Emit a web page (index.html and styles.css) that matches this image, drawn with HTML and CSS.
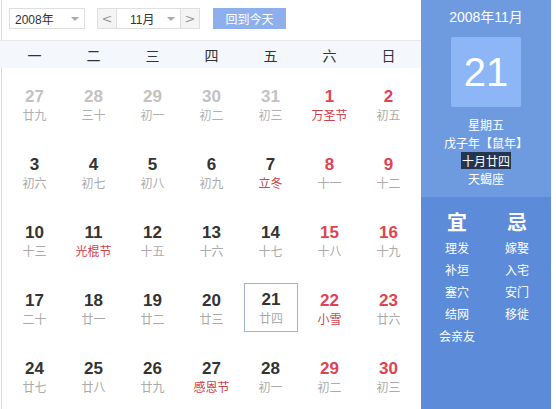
FILE: index.html
```html
<!DOCTYPE html>
<html><head><meta charset="utf-8"><link rel="stylesheet" href="styles.css"></head>
<body>
<div class="cal">
  <div class="main">
    <div class="toolbar">
      <div class="sel year"><span>2008年</span><i class="tri"></i></div>
      <div class="mgroup">
        <span class="arrow">&lt;</span>
        <div class="sel month"><span>11月</span><i class="tri"></i></div>
        <span class="arrow">&gt;</span>
      </div>
      <button class="today">回到今天</button>
    </div>
    <div class="weekhead">
      <span>一</span><span>二</span><span>三</span><span>四</span><span>五</span><span>六</span><span>日</span>
    </div>
    <div class="grid">
      <div class="cell other"><b>27</b><small>廿九</small></div>
      <div class="cell other"><b>28</b><small>三十</small></div>
      <div class="cell other"><b>29</b><small>初一</small></div>
      <div class="cell other"><b>30</b><small>初二</small></div>
      <div class="cell other"><b>31</b><small>初三</small></div>
      <div class="cell wk"><b>1</b><small class="fest">万圣节</small></div>
      <div class="cell wk"><b>2</b><small>初五</small></div>

      <div class="cell"><b>3</b><small>初六</small></div>
      <div class="cell"><b>4</b><small>初七</small></div>
      <div class="cell"><b>5</b><small>初八</small></div>
      <div class="cell"><b>6</b><small>初九</small></div>
      <div class="cell"><b>7</b><small class="fest">立冬</small></div>
      <div class="cell wk"><b>8</b><small>十一</small></div>
      <div class="cell wk"><b>9</b><small>十二</small></div>

      <div class="cell"><b>10</b><small>十三</small></div>
      <div class="cell"><b>11</b><small class="fest">光棍节</small></div>
      <div class="cell"><b>12</b><small>十五</small></div>
      <div class="cell"><b>13</b><small>十六</small></div>
      <div class="cell"><b>14</b><small>十七</small></div>
      <div class="cell wk"><b>15</b><small>十八</small></div>
      <div class="cell wk"><b>16</b><small>十九</small></div>

      <div class="cell"><b>17</b><small>二十</small></div>
      <div class="cell"><b>18</b><small>廿一</small></div>
      <div class="cell"><b>19</b><small>廿二</small></div>
      <div class="cell"><b>20</b><small>廿三</small></div>
      <div class="cell cur"><b>21</b><small>廿四</small></div>
      <div class="cell wk"><b>22</b><small class="fest">小雪</small></div>
      <div class="cell wk"><b>23</b><small>廿六</small></div>

      <div class="cell"><b>24</b><small>廿七</small></div>
      <div class="cell"><b>25</b><small>廿八</small></div>
      <div class="cell"><b>26</b><small>廿九</small></div>
      <div class="cell"><b>27</b><small class="fest">感恩节</small></div>
      <div class="cell"><b>28</b><small>初一</small></div>
      <div class="cell wk"><b>29</b><small>初二</small></div>
      <div class="cell wk"><b>30</b><small>初三</small></div>
    </div>
  </div>
  <div class="side">
    <div class="side-top">
      <div class="ym">2008年11月</div>
      <div class="bigday">21</div>
      <div class="info">
        <div>星期五</div>
        <div>戊子年【鼠年】</div>
        <div><span class="hl">十月廿四</span></div>
        <div>天蝎座</div>
      </div>
    </div>
    <div class="side-bot">
      <div class="col">
        <div class="h">宜</div>
        <div>理发</div><div>补垣</div><div>塞穴</div><div>结网</div><div>会亲友</div>
      </div>
      <div class="col">
        <div class="h">忌</div>
        <div>嫁娶</div><div>入宅</div><div>安门</div><div>移徙</div>
      </div>
    </div>
  </div>
</div>
</body></html>
```
FILE: styles.css
```css
* { box-sizing: border-box; }
html, body { margin: 0; padding: 0; background: #fff; }
body { font-family: "Liberation Sans", Arial, "Noto Sans CJK SC", sans-serif; width: 556px; height: 409px; overflow: hidden; }
.cal { display: flex; height: 409px; }
.main { width: 420px; border-left: 1px solid #d8d8d8; margin-left: 1px; }
.toolbar { display: flex; align-items: center; height: 40px; padding: 0 0 3px 7px; }
.sel { display: flex; align-items: center; justify-content: space-between; height: 21px; border: 1px solid #dedede; font-size: 12px; color: #333; padding: 0 5px 0 5px; background: #fff; }
.year { width: 76px; }
.tri { width: 0; height: 0; border-left: 4px solid transparent; border-right: 4px solid transparent; border-top: 4px solid #aaa; }
.mgroup { display: flex; margin-left: 12px; height: 21px; }
.arrow { width: 20px; height: 21px; border: 1px solid #dedede; background: #f4f4f4; color: #999; font-size: 13px; display: flex; align-items: center; justify-content: center; font-family: "DejaVu Sans", sans-serif; }
.month { width: 63px; border-left: none; border-right: none; padding-left: 13px; }
.today { margin-left: 13px; width: 73px; height: 21px; border: none; background: #8db0ec; color: #fff; font-family: "Noto Sans CJK SC", sans-serif; font-size: 12px; padding: 0; }
.weekhead { display: grid; grid-template-columns: repeat(7, 59px); margin-left: -2px; padding-left: 5px; width: 422px; height: 28px; background: #f4f8fd; border-top: 1px solid #e3e8ef; align-items: center; font-family: "Noto Sans CJK SC", sans-serif; font-size: 14px; color: #333; }
.weekhead span { text-align: center; }
.grid { display: grid; grid-template-columns: repeat(7, 59px); grid-auto-rows: 68px; padding-left: 3px; }
.cell { display: flex; flex-direction: column; align-items: center; padding-top: 19px; }
.cell b { font-size: 17px; font-weight: bold; color: #333; line-height: 20px; }
.cell small { font-family: "Noto Sans CJK SC", sans-serif; font-size: 12px; color: #aaa; line-height: 16px; }
.cell.other b { color: #c2c2c2; }
.cell.other small { color: #b0b0b0; }
.cell.wk b { color: #e0434f; }
.cell small.fest { color: #d1414d; }
.cell.cur { margin: 11px 2px 8px 3px; border: 1px solid #9db4d6; padding-top: 0; justify-content: center; }
.side { width: 130px; display: flex; flex-direction: column; color: #fff; font-family: "Noto Sans CJK SC", sans-serif; }
.side-top { background: #6e9ae0; height: 197px; display: flex; flex-direction: column; align-items: center; padding-top: 7px; }
.ym { font-family: "Liberation Sans", "Noto Sans CJK SC", sans-serif; font-size: 14px; line-height: 20px; }
.bigday { margin-top: 10px; width: 70px; height: 70px; background: #8cb6f6; border-radius: 2px; font-family: "Liberation Sans", sans-serif; font-size: 40px; display: flex; align-items: center; justify-content: center; }
.info { margin-top: 9px; font-size: 12px; line-height: 18px; text-align: center; }
.hl { background: #26354f; padding: 0 1px; }
.side-bot { flex: 1; background: #5b8bd9; display: flex; padding-top: 11px; }
.col { display: flex; flex-direction: column; align-items: center; font-size: 12px; line-height: 22px; }
.col:first-child { width: 72px; }
.col:last-child { width: 50px; margin-left: -1px; }
.col .h { font-size: 20px; font-weight: bold; line-height: 28px; margin-bottom: 1px; }
```
